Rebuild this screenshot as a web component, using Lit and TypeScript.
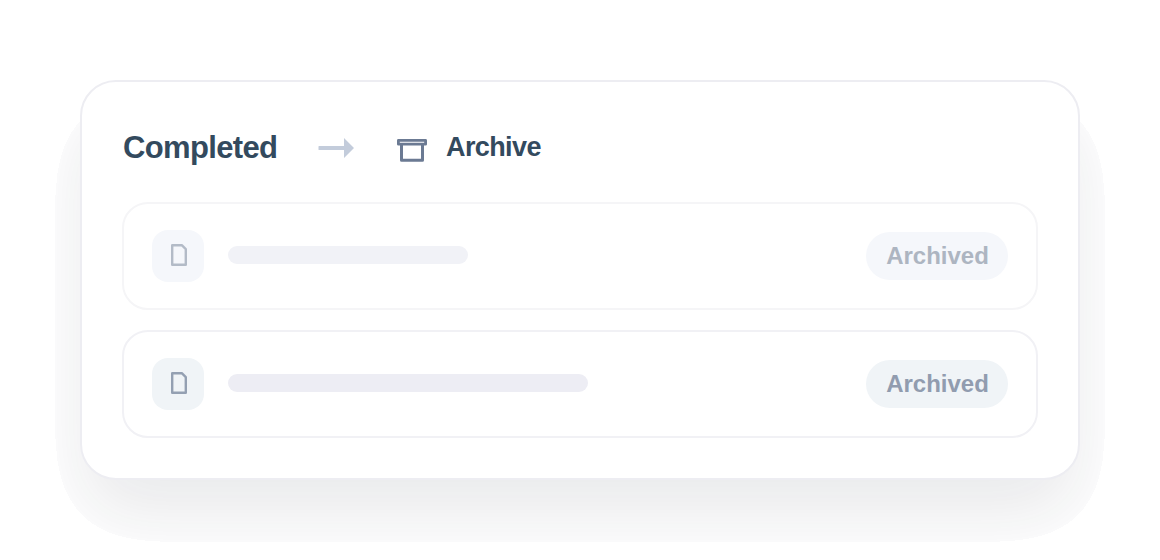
import { LitElement, html, css } from 'lit';
import { customElement, property } from 'lit/decorators.js';
import { styleMap } from 'lit/directives/style-map.js';

interface ArchivedItem {
  width: number;
  fading: boolean;
}

// alpha steps of the card shadow, the faint outer part is dropped
const SHADOW_STEPS = Array.from({ length: 50 }, (_, i) => (i < 12 ? 0 : (i + 0.5) / 50)).join(' ');

@customElement('archive-row')
export class ArchiveRow extends LitElement {
  static styles = css`
    :host {
      display: block;
    }
    .row {
      display: flex;
      align-items: center;
      box-sizing: border-box;
      height: 108px;
      padding: 0 28px;
      border: 2px solid #f1f1f5;
      border-radius: 26px;
      background: #ffffff;
    }
    .tile {
      display: flex;
      width: 52px;
      height: 52px;
      border-radius: 16px;
      background: #f0f4f7;
      color: #94a0b2;
    }
    .bar {
      height: 18px;
      margin: 0 auto 2px 24px;
      border-radius: 9px;
      background: #ededf4;
    }
    .badge {
      box-sizing: border-box;
      width: 142px;
      height: 48px;
      padding-left: 1px;
      border-radius: 24px;
      background: #f0f4f7;
      color: #919caf;
      font-size: 24px;
      font-weight: 700;
      line-height: 48px;
      text-align: center;
    }
    .fading {
      border-color: #f5f5f7;
    }
    .fading .tile {
      background: #f5f7fb;
      color: #b3bbc7;
    }
    .fading .bar {
      background: #f1f2f7;
    }
    .fading .badge {
      background: #f5f7fb;
      color: #adb5c1;
    }
  `;

  @property({ type: Number }) barWidth = 240;
  @property({ type: Boolean }) fading = false;

  render() {
    return html`
      <div class="row ${this.fading ? 'fading' : ''}">
        <div class="tile">
          <svg width="52" height="52" viewBox="0 0 52 52" fill="none" stroke="currentColor" stroke-width="2.4" stroke-linejoin="round">
            <path d="M20.2 15.2H29.8L33.8 19.2V34.8H20.2Z" />
          </svg>
        </div>
        <div class="bar" style=${styleMap({ width: `${this.barWidth}px` })}></div>
        <div class="badge">Archived</div>
      </div>
    `;
  }
}

@customElement('app-root')
export class AppRoot extends LitElement {
  static styles = css`
    :host {
      display: block;
      box-sizing: border-box;
      height: 560px;
      padding: 80px;
      overflow: hidden;
      background: #ffffff;
      font-family: 'Liberation Sans', Arial, sans-serif;
    }
    .stage {
      position: relative;
      height: 400px;
    }
    .shadow {
      position: absolute;
      inset: 0;
      border-radius: 36px;
      background: #181c2e;
      filter: url(#soft-shadow);
      opacity: 0.09;
    }
    .defs {
      position: absolute;
    }
    .card {
      position: relative;
      box-sizing: border-box;
      height: 400px;
      padding: 40px;
      border: 2px solid #ededf2;
      border-radius: 36px;
      background: #ffffff;
    }
    .header {
      display: flex;
      align-items: center;
      height: 50px;
      margin-bottom: 30px;
      color: #334a5e;
      font-weight: 700;
    }
    .from {
      box-sizing: border-box;
      width: 196px;
      padding: 2px 0 0 1px;
      font-size: 31px;
      letter-spacing: -0.65px;
    }
    .arrow {
      margin: 2px 42px 0 0;
    }
    .box {
      margin: 6px 18px 0 0;
    }
    .to {
      font-size: 27px;
      letter-spacing: -0.6px;
    }
    .list {
      display: flex;
      flex-direction: column;
      gap: 20px;
    }
  `;

  items: ArchivedItem[] = [
    { width: 240, fading: true },
    { width: 360, fading: false },
  ];

  render() {
    return html`
      <div class="stage">
        <svg class="defs" width="0" height="0">
          <filter id="soft-shadow" x="-20%" y="-50%" width="140%" height="200%" color-interpolation-filters="sRGB">
            <feGaussianBlur stdDeviation="36" />
            <feOffset dy="37" />
            <feComponentTransfer>
              <feFuncA type="discrete" tableValues=${SHADOW_STEPS} />
            </feComponentTransfer>
          </filter>
        </svg>
        <div class="shadow"></div>
        <div class="card">
          <div class="header">
            <span class="from">Completed</span>
            <svg class="arrow" width="36" height="22" viewBox="0 0 36 22" fill="#c3ccdb">
              <path d="M.5 9.5Q.5 9 1 9H26V1L36 11L26 21V13H1Q.5 13 .5 12.5Z" />
            </svg>
            <svg class="box" width="32" height="26" viewBox="0 0 32 26" fill="none" stroke="#6b7a93" stroke-width="3" stroke-linejoin="round">
              <path d="M2.4 3.4H29.6V7.2H2.4Z" stroke-width="2.8" />
              <path d="M5.5 8V23.2H26.5V8" />
            </svg>
            <span class="to">Archive</span>
          </div>
          <div class="list">
            ${this.items.map(
              (item) => html`<archive-row .barWidth=${item.width} .fading=${item.fading}></archive-row>`
            )}
          </div>
        </div>
      </div>
    `;
  }
}
